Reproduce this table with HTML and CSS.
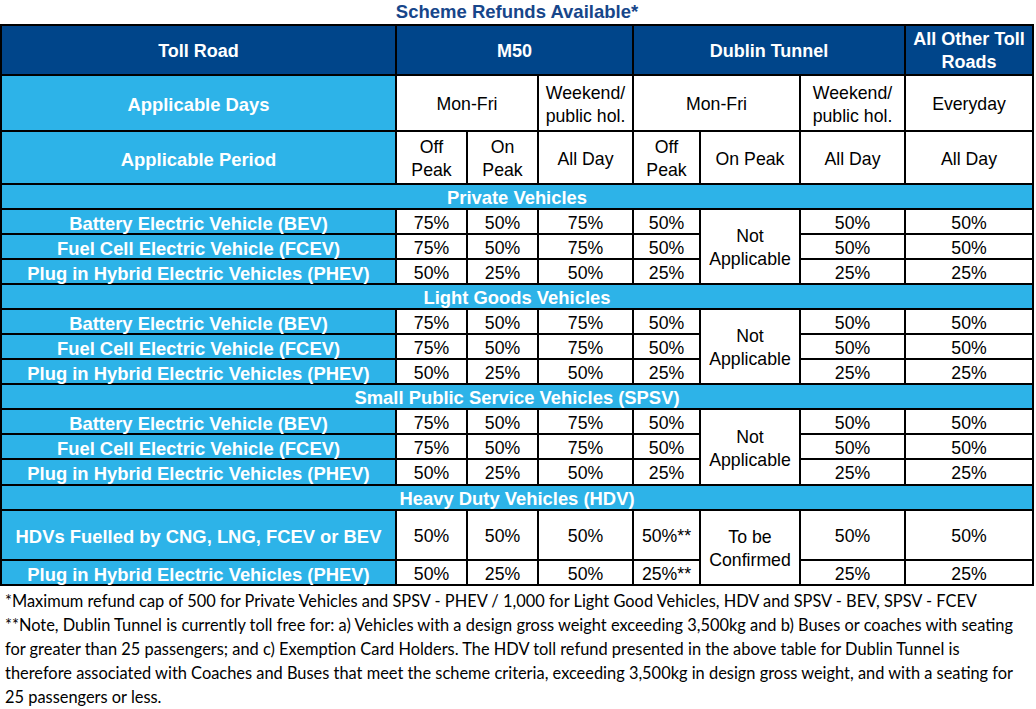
FILE: index.html
```html
<!DOCTYPE html>
<html lang="en">
<head>
<meta charset="utf-8">
<title>Scheme Refunds Available</title>
<link rel="stylesheet" href="styles.css">
</head>
<body>
<div class="page">
  <h1 class="title">Scheme Refunds Available*</h1>
  <div class="grid">
    <div class="c hd">Toll Road</div>
    <div class="c hd span3">M50</div>
    <div class="c hd span3">Dublin Tunnel</div>
    <div class="c hd">All Other Toll<br>Roads</div>

    <div class="c lb">Applicable Days</div>
    <div class="c v span2">Mon-Fri</div>
    <div class="c v">Weekend/<br>public hol.</div>
    <div class="c v span2">Mon-Fri</div>
    <div class="c v">Weekend/<br>public hol.</div>
    <div class="c v">Everyday</div>

    <div class="c lb">Applicable Period</div>
    <div class="c v">Off<br>Peak</div>
    <div class="c v">On<br>Peak</div>
    <div class="c v">All Day</div>
    <div class="c v">Off<br>Peak</div>
    <div class="c v">On Peak</div>
    <div class="c v">All Day</div>
    <div class="c v">All Day</div>

    <div class="c sec">Private Vehicles</div>
    <div class="c lb">Battery Electric Vehicle (BEV)</div>
    <div class="c v">75%</div><div class="c v">50%</div><div class="c v">75%</div><div class="c v">50%</div>
    <div class="c v rs3">Not<br>Applicable</div>
    <div class="c v">50%</div><div class="c v">50%</div>
    <div class="c lb">Fuel Cell Electric Vehicle (FCEV)</div>
    <div class="c v">75%</div><div class="c v">50%</div><div class="c v">75%</div><div class="c v">50%</div>
    <div class="c v">50%</div><div class="c v">50%</div>
    <div class="c lb">Plug in Hybrid Electric Vehicles (PHEV)</div>
    <div class="c v">50%</div><div class="c v">25%</div><div class="c v">50%</div><div class="c v">25%</div>
    <div class="c v">25%</div><div class="c v">25%</div>

    <div class="c sec">Light Goods Vehicles</div>
    <div class="c lb">Battery Electric Vehicle (BEV)</div>
    <div class="c v">75%</div><div class="c v">50%</div><div class="c v">75%</div><div class="c v">50%</div>
    <div class="c v rs3">Not<br>Applicable</div>
    <div class="c v">50%</div><div class="c v">50%</div>
    <div class="c lb">Fuel Cell Electric Vehicle (FCEV)</div>
    <div class="c v">75%</div><div class="c v">50%</div><div class="c v">75%</div><div class="c v">50%</div>
    <div class="c v">50%</div><div class="c v">50%</div>
    <div class="c lb">Plug in Hybrid Electric Vehicles (PHEV)</div>
    <div class="c v">50%</div><div class="c v">25%</div><div class="c v">50%</div><div class="c v">25%</div>
    <div class="c v">25%</div><div class="c v">25%</div>

    <div class="c sec">Small Public Service Vehicles (SPSV)</div>
    <div class="c lb">Battery Electric Vehicle (BEV)</div>
    <div class="c v">75%</div><div class="c v">50%</div><div class="c v">75%</div><div class="c v">50%</div>
    <div class="c v rs3">Not<br>Applicable</div>
    <div class="c v">50%</div><div class="c v">50%</div>
    <div class="c lb">Fuel Cell Electric Vehicle (FCEV)</div>
    <div class="c v">75%</div><div class="c v">50%</div><div class="c v">75%</div><div class="c v">50%</div>
    <div class="c v">50%</div><div class="c v">50%</div>
    <div class="c lb">Plug in Hybrid Electric Vehicles (PHEV)</div>
    <div class="c v">50%</div><div class="c v">25%</div><div class="c v">50%</div><div class="c v">25%</div>
    <div class="c v">25%</div><div class="c v">25%</div>

    <div class="c sec">Heavy Duty Vehicles (HDV)</div>
    <div class="c lb">HDVs Fuelled by CNG, LNG, FCEV or BEV</div>
    <div class="c v">50%</div><div class="c v">50%</div><div class="c v">50%</div><div class="c v">50%**</div>
    <div class="c v rs2">To be<br>Confirmed</div>
    <div class="c v">50%</div><div class="c v">50%</div>
    <div class="c lb">Plug in Hybrid Electric Vehicles (PHEV)</div>
    <div class="c v">50%</div><div class="c v">25%</div><div class="c v">50%</div><div class="c v">25%**</div>
    <div class="c v">25%</div><div class="c v">25%</div>
  </div>
  <div class="notes">
    <p>*Maximum refund cap of 500 for Private Vehicles and SPSV - PHEV / 1,000 for Light Good Vehicles, HDV and SPSV - BEV, SPSV - FCEV</p>
    <p>**Note, Dublin Tunnel is currently toll free for: a) Vehicles with a design gross weight exceeding 3,500kg and b) Buses or coaches with seating<br>for greater than 25 passengers; and c) Exemption Card Holders. The HDV toll refund presented in the above table for Dublin Tunnel is<br>therefore associated with Coaches and Buses that meet the scheme criteria, exceeding 3,500kg in design gross weight, and with a seating for<br>25 passengers or less.</p>
  </div>
</div>
</body>
</html>
```

FILE: styles.css
```css
html, body {
  margin: 0;
  padding: 0;
  background: #ffffff;
}

.page {
  width: 1036px;
  font-family: "Liberation Sans", Arial, sans-serif;
}

.title {
  margin: 0;
  width: 1034px;
  height: 24px;
  line-height: 24px;
  font-size: 18.5px;
  font-weight: bold;
  text-align: center;
  color: #17468a;
}

.grid {
  display: grid;
  width: 1034px;
  box-sizing: border-box;
  padding: 2px;
  gap: 2px;
  background: #000000;
  grid-template-columns: 393px 69px 69px 93px 65px 98px 103px 126px;
  grid-template-rows: 48px 54px 51px repeat(11, 23px) 24px 23px 48px 23px;
}

.c {
  display: flex;
  align-items: center;
  justify-content: center;
  text-align: center;
  font-size: 17.7px;
  line-height: 23px;
  padding-top: 3px;
  box-sizing: border-box;
  white-space: nowrap;
}

.hd {
  background: #00458a;
  color: #ffffff;
  font-weight: bold;
  font-size: 18px;
  padding-top: 2px;
}

.lb {
  background: #2db3e8;
  color: #ffffff;
  font-weight: bold;
  font-size: 18.4px;
}

.sec {
  grid-column: 1 / -1;
  background: #2db3e8;
  color: #ffffff;
  font-weight: bold;
  font-size: 18.4px;
  padding-top: 2px;
}

.v {
  background: #ffffff;
  color: #000000;
}

.span2 { grid-column: span 2; }
.span3 { grid-column: span 3; }
.rs2 { grid-row: span 2; }
.rs3 { grid-row: span 3; }

.notes {
  padding: 3px 0 0 5px;
  font-family: Lato, "Liberation Sans", sans-serif;
  font-size: 16.4px;
  line-height: 24px;
  color: #000000;
}

.notes p {
  margin: 0;
  white-space: nowrap;
}
```
